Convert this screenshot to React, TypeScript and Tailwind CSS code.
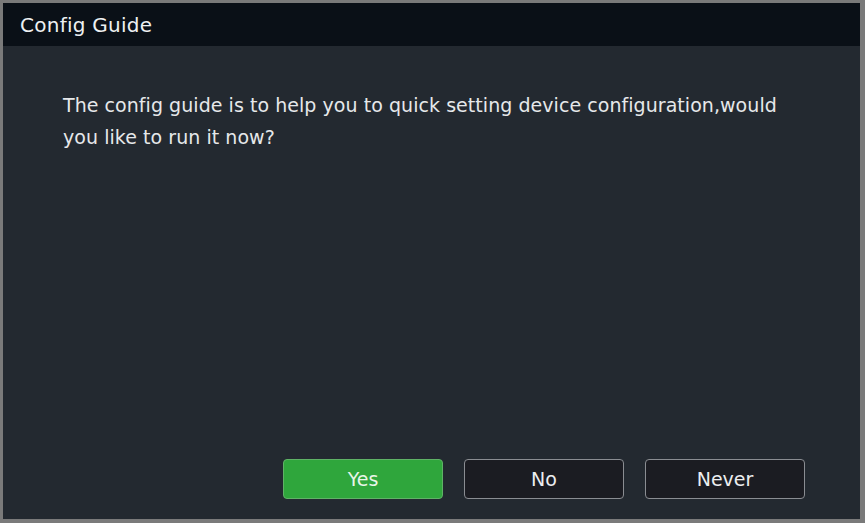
import React from "react";

export default function App() {
  return (
    <div className="w-[865px] h-[523px] bg-[#7a7a7a] pt-[3px] pl-[3px] pr-[5px] pb-[4px]" style={{ fontFamily: '"DejaVu Sans", sans-serif' }}>
      <div className="flex h-full w-full flex-col bg-[#232930]">
        <div className="flex h-[43px] items-center bg-[#0a1017] pl-[17px] text-[20px] tracking-[0.25px] text-[#eef0f2]">
          Config Guide
        </div>
        <div className="flex flex-1 flex-col pl-[60px] pr-[50px] pt-[43px]">
          <p className="text-[19px] leading-[32px] tracking-[0.05px] text-[#e6e8ea]">
            The config guide is to help you to quick setting device configuration,would you like to run it now?
          </p>
        </div>
        <div className="flex justify-end gap-[21px] pr-[55px] pb-[20px]">
          <button className="h-[40px] w-[160px] rounded-[4px] border border-[#5fb266] bg-[#2fa63c] text-[19px] text-[#e8f5e8]">Yes</button>
          <button className="h-[40px] w-[160px] rounded-[4px] border border-[#8a8d92] bg-[#1b1c22] text-[19px] text-[#eceef0]">No</button>
          <button className="h-[40px] w-[160px] rounded-[4px] border border-[#8a8d92] bg-[#1b1c22] text-[19px] text-[#eceef0]">Never</button>
        </div>
      </div>
    </div>
  );
}
